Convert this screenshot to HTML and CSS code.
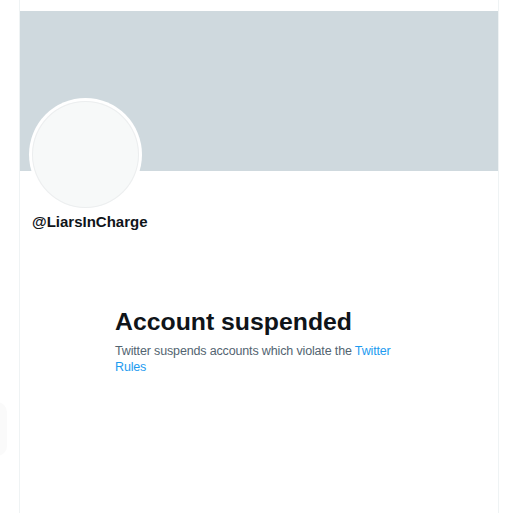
FILE: index.html
```html
<!DOCTYPE html>
<html lang="en">
<head>
<meta charset="utf-8">
<link rel="stylesheet" href="styles.css">
</head>
<body>
<div class="edge-shadow"></div>
<main class="column">
  <div class="top-gap"></div>
  <div class="banner"></div>
  <div class="profile">
    <div class="avatar"><div class="avatar-inner"></div></div>
    <div class="handle">@LiarsInCharge</div>
  </div>
  <section class="notice">
    <h1 class="notice-title">Account suspended</h1>
    <p class="notice-text">Twitter suspends accounts which violate the <a class="notice-link" href="#">Twitter Rules</a></p>
  </section>
</main>
</body>
</html>
```
FILE: styles.css
```css
html, body {
  margin: 0;
  padding: 0;
  background: #ffffff;
  height: 513px;
  overflow: hidden;
}
body {
  font-family: "Liberation Sans", Arial, sans-serif;
  color: #0f1419;
  position: relative;
}
.column {
  margin-left: 19px;
  width: 478px;
  min-height: 513px;
  border-left: 1px solid #eff3f4;
  border-right: 1px solid #eff3f4;
}
.top-gap {
  height: 11px;
}
.banner {
  height: 160px;
  background: #cfd9de;
}
.profile {
  padding-left: 9px;
}
.avatar {
  width: 113px;
  height: 113px;
  margin-top: -73px;
  border-radius: 50%;
  background: #ffffff;
  padding: 3px;
  box-sizing: border-box;
}
.avatar-inner {
  width: 100%;
  height: 100%;
  border-radius: 50%;
  background: #f7f9f9;
  box-shadow: inset 0 0 0 1px #eceeef;
}
.handle {
  margin-top: 1px;
  padding-left: 3px;
  font-size: 15px;
  font-weight: bold;
  line-height: 20px;
}
.notice {
  margin: 76px 0 0 95px;
  width: 290px;
}
.notice-title {
  margin: 0;
  font-size: 24.8px;
  line-height: 28px;
  font-weight: bold;
}
.notice-text {
  margin: 7px 0 0;
  font-size: 12.5px;
  letter-spacing: -0.15px;
  line-height: 16px;
  color: #536471;
}
.notice-link {
  color: #1d9bf0;
  text-decoration: none;
}
.edge-shadow {
  position: absolute;
  left: -20px;
  top: 402px;
  width: 27px;
  height: 54px;
  border-radius: 10px;
  background: #fafafa;
}
```
